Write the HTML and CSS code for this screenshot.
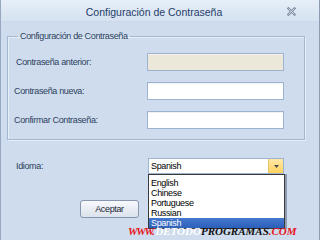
FILE: index.html
```html
<!DOCTYPE html>
<html lang="es">

<head>
    <meta charset="UTF-8" />
    <meta name="viewport" content="width=device-width, initial-scale=1.0" />
    <title>Configuración de Contraseña</title>
    <link rel="stylesheet" href="styles.css">
</head>

<body>
    <div class="window">
        <div class="titlebar">
            <span class="title">Configuración de Contraseña</span>
            <span class="close">
                <svg width="9" height="9" viewBox="0 0 9 9">
                    <path d="M1.5 1.5 L7.5 7.5 M7.5 1.5 L1.5 7.5" stroke="#7d8ba0" stroke-width="2.4" stroke-linecap="square" />
                    <path d="M1.5 1.5 L7.5 7.5 M7.5 1.5 L1.5 7.5" stroke="#e3e9f1" stroke-width="0.8" />
                </svg>
            </span>
        </div>
        <div class="content">
            <fieldset class="group">
                <legend class="group-title">Configuración de Contraseña</legend>
                <div class="form-row">
                    <label class="label label-indent">Contraseña anterior:</label>
                    <input class="field field-disabled" type="password" disabled>
                </div>
                <div class="form-row">
                    <label class="label">Contraseña nueva:</label>
                    <input class="field" type="password">
                </div>
                <div class="form-row">
                    <label class="label">Confirmar Contraseña:</label>
                    <input class="field" type="password">
                </div>
            </fieldset>

            <div class="lang-row">
                <span class="label">Idioma:</span>
                <div class="combo">
                    <span class="combo-value">Spanish</span>
                    <span class="combo-btn">
                        <svg width="5" height="3" viewBox="0 0 5 3">
                            <path d="M0 0 H5 L2.5 3 Z" fill="#4a4a4a" />
                        </svg>
                    </span>
                    <ul class="combo-list">
                        <li class="combo-item">English</li>
                        <li class="combo-item">Chinese</li>
                        <li class="combo-item">Portuguese</li>
                        <li class="combo-item">Russian</li>
                        <li class="combo-item selected">Spanish</li>
                    </ul>
                </div>
            </div>

            <div class="button-row">
                <button class="btn">Aceptar</button>
            </div>
        </div>

        <div class="watermark"><span class="wm-red wm-www">WWW.</span><span class="wm-white">DETODO</span><span class="wm-black">PROGRAMAS</span><span class="wm-red">.COM</span></div>
    </div>
</body>

</html>
```

FILE: styles.css
```css
* {
    margin: 0;
    padding: 0;
    box-sizing: border-box;
}

body {
    width: 320px;
    height: 240px;
    overflow: hidden;
    font-family: "Liberation Sans", Arial, sans-serif;
    font-size: 9px;
    letter-spacing: -0.35px;
}

.window {
    position: relative;
    width: 320px;
    height: 240px;
    background: #cfdcee;
    border-left: 1px solid #97a8c0;
    border-right: 1px solid #8d9cb2;
    overflow: hidden;
}

.titlebar {
    height: 22px;
    display: flex;
    align-items: center;
    background: linear-gradient(#e6eef8, #d6e2f1);
    border-bottom: 1px solid #cbd8ea;
}

.title {
    flex: 1;
    text-align: center;
    font-size: 10.5px;
    letter-spacing: 0;
    color: #1f3d68;
    padding: 3px 0 0 20px;
}

.close {
    margin: 0 23px 0 0;
    display: flex;
    padding-top: 2px;
}

.group {
    margin: 8px 14px 0 6px;
    padding: 11px 18px 10px 6px;
    border: 1px solid #a3b7d1;
    box-shadow: inset 1px 1px 0 #e6eef8, 1px 1px 0 #e6eef8;
}

.group-title {
    margin-left: 4px;
    padding: 0 2px;
    line-height: 12px;
    color: #2b3f5c;
}

.form-row {
    display: grid;
    grid-template-columns: 133px 137px;
    align-items: center;
    height: 18px;
}

.form-row + .form-row {
    margin-top: 11px;
}

.label {
    color: #2b3f5c;
}

.label-indent {
    padding-left: 2px;
}

.field {
    height: 18px;
    width: 137px;
    border: 1px solid #9db3cf;
    background: #fff;
    box-shadow: inset 0 1px 0 #eef2f7;
    outline: none;
}

.field-disabled {
    background: #ebe7d9;
    box-shadow: inset 0 1px 0 #f5f2ea;
}

.lang-row {
    display: grid;
    grid-template-columns: 132px 136px;
    align-items: center;
    margin: 18px 0 0 15px;
    height: 16px;
}

.combo {
    position: relative;
    display: flex;
    height: 16px;
    border: 1px solid #9db3cf;
    background: #fff;
}

.combo-value {
    flex: 1;
    padding-left: 2px;
    line-height: 14px;
    color: #000;
}

.combo-btn {
    width: 15px;
    display: flex;
    align-items: center;
    justify-content: center;
    background: linear-gradient(#ffe9a8, #ffd25e);
    border-left: 1px solid #e8c46a;
}

.combo-list {
    position: absolute;
    top: 15px;
    left: -1px;
    width: 137px;
    list-style: none;
    background: #fff;
    border: 1px solid #3a3a3a;
    box-shadow: 2px 0 0 #8e9bb0;
    padding-top: 3px;
}

.combo-item {
    height: 10px;
    line-height: 10px;
    padding-left: 2px;
    color: #000;
}

.combo-item.selected {
    background: linear-gradient(#4478d0, #2c5fb9);
    color: #fff;
}

.button-row {
    margin: 26px 0 0 79px;
}

.btn {
    width: 59px;
    height: 18px;
    border: 1px solid #8797b0;
    border-radius: 3px;
    background: linear-gradient(#f7f9fb, #e9edf3 50%, #dce3ec);
    font-family: inherit;
    font-size: 9px;
    letter-spacing: -0.35px;
    color: #1c2738;
}

.watermark {
    position: absolute;
    left: 127px;
    top: 225px;
    font-family: "Liberation Serif", "Times New Roman", serif;
    font-style: italic;
    font-weight: bold;
    font-size: 11px;
    letter-spacing: 0;
    white-space: nowrap;
}

.wm-red {
    color: #e8141c;
}

.wm-www {
    letter-spacing: -1.5px;
    margin-right: 2px;
}

.wm-white {
    color: #fff;
    text-shadow: 0 0 1px #c9d4e4;
}

.wm-black {
    color: #111;
}
```
